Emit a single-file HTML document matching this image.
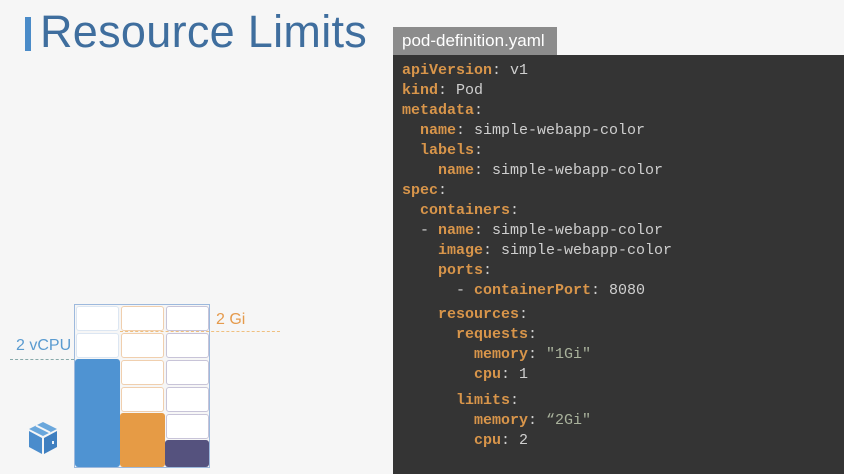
<!DOCTYPE html>
<html><head><meta charset="utf-8"><style>
body{margin:0;width:844px;height:474px;background:#f6f6f6;position:relative;overflow:hidden;font-family:"Liberation Sans",sans-serif}
.bar{position:absolute;left:25px;top:17px;width:6px;height:34px;background:#4a8bc8}
.title{position:absolute;left:40px;top:6px;font-size:45px;color:#3f6e9e;letter-spacing:0.3px}
.tab{position:absolute;left:393px;top:27px;width:164px;height:28px;background:#8c8c8c;color:#fff;font-size:17px;line-height:28px;padding-left:9px;box-sizing:border-box}
.panel{position:absolute;left:393px;top:55px;width:451px;height:419px;background:#343434}
pre{position:absolute;margin:0;left:402px;font-family:"Liberation Mono",monospace;font-size:15px;line-height:20px;color:#cfcfcf}
.k{color:#d8954a;font-weight:bold}.s{color:#a9b29c}
.cell{position:absolute;width:43px;height:25px;border:1px solid;border-radius:3px;box-sizing:border-box;background:#fff}
.blk{position:absolute;border-radius:3px}
</style></head><body>
<div class="bar"></div><div class="title">Resource Limits</div>
<div class="tab">pod-definition.yaml</div>
<div class="panel"></div>
<pre style="top:61px"><span class="k">apiVersion</span>: v1
<span class="k">kind</span>: Pod
<span class="k">metadata</span>:
  <span class="k">name</span>: simple-webapp-color
  <span class="k">labels</span>:
    <span class="k">name</span>: simple-webapp-color
<span class="k">spec</span>:
  <span class="k">containers</span>:
  - <span class="k">name</span>: simple-webapp-color
    <span class="k">image</span>: simple-webapp-color
    <span class="k">ports</span>:
      - <span class="k">containerPort</span>: 8080</pre>
<pre style="top:305px">    <span class="k">resources</span>:
      <span class="k">requests</span>:
        <span class="k">memory</span>: <span class="s">"1Gi"</span>
        <span class="k">cpu</span>: 1</pre>
<pre style="top:391px">      <span class="k">limits</span>:
        <span class="k">memory</span>: <span class="s">“2Gi"</span>
        <span class="k">cpu</span>: 2</pre>
<div style="position:absolute;left:74px;top:304px;width:136px;height:164px;border:1px solid #9db9dd;box-sizing:border-box"></div>
<div id="g"></div>
<div class="blk" style="left:75px;top:359px;width:45px;height:108px;background:#4f93d2"></div>
<div class="blk" style="left:120px;top:413px;width:45px;height:54px;background:#e69b45"></div>
<div class="blk" style="left:165px;top:440px;width:44px;height:27px;background:#55527e"></div>
<div style="position:absolute;left:10px;top:359px;width:64px;border-top:1px dashed #8aa"></div>
<div style="position:absolute;left:120px;top:331px;width:160px;border-top:1px dashed #f0c080"></div>
<div style="position:absolute;left:16px;top:337px;font-size:16px;color:#5a9bd0">2 vCPU</div>
<div style="position:absolute;left:216px;top:311px;font-size:16px;color:#e59a4c">2 Gi</div>
<svg style="position:absolute;left:27px;top:420px" width="32" height="36" viewBox="0 0 32 36">
<path d="M16 2 L30 9 L16 16 L2 9Z" fill="#6aa7dc"/><path d="M2 11 L15 18 L15 34 L2 27Z" fill="#4a8ccc"/><path d="M17 18 L30 11 L30 27 L17 34Z" fill="#3f7fc0"/>
<path d="M9 5.5 L23 12.5" stroke="#f6f6f6" stroke-width="2"/><rect x="25" y="21" width="2" height="3" fill="#eaf2fa"/></svg>
<script>
var g=document.getElementById('g'),h='';
var cols=[75,120,165],rows=[305,332,359,386,413,440];
var bc=['#dce6f2','#f0cfae','#c8c4d8'];
for(var r=0;r<6;r++)for(var c=0;c<3;c++){
h+='<div class="cell" style="left:'+(cols[c]+1)+'px;top:'+(rows[r]+1)+'px;border-color:'+bc[c]+'"></div>';}
g.innerHTML=h;
</script>
</body></html>
